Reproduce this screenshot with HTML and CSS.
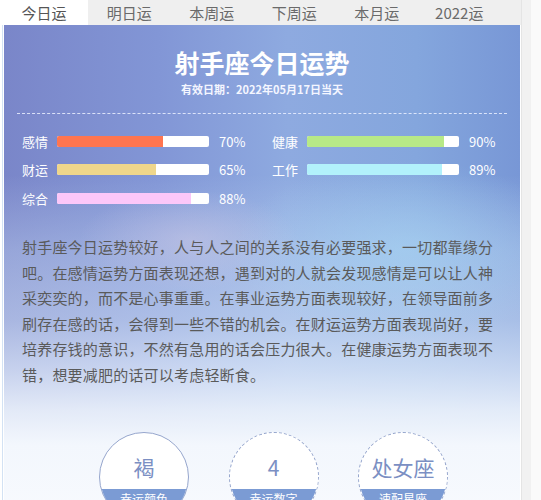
FILE: index.html
```html
<!DOCTYPE html>
<html lang="zh">
<head>
<meta charset="utf-8">
<title>射手座今日运势</title>
<link rel="stylesheet" href="styles.css">
</head>
<body>
<div class="page">
  <div class="main">
    <nav class="tabs">
      <div class="tab active">今日运</div>
      <div class="tab">明日运</div>
      <div class="tab">本周运</div>
      <div class="tab">下周运</div>
      <div class="tab">本月运</div>
      <div class="tab">2022运</div>
    </nav>
    <div class="wrap">
      <section class="card">
        <h1 class="title">射手座今日运势</h1>
        <div class="date">有效日期：2022年05月17日当天</div>
        <div class="dash"></div>
        <div class="bars">
          <div class="item"><span class="lbl">感情</span><span class="bar"><span class="fill f-love" style="width:70%"></span></span><span class="pct">70%</span></div>
          <div class="item"><span class="lbl">健康</span><span class="bar"><span class="fill f-health" style="width:90%"></span></span><span class="pct">90%</span></div>
          <div class="item"><span class="lbl">财运</span><span class="bar"><span class="fill f-money" style="width:65%"></span></span><span class="pct">65%</span></div>
          <div class="item"><span class="lbl">工作</span><span class="bar"><span class="fill f-work" style="width:89%"></span></span><span class="pct">89%</span></div>
          <div class="item"><span class="lbl">综合</span><span class="bar"><span class="fill f-all" style="width:88%"></span></span><span class="pct">88%</span></div>
        </div>
        <p class="text">射手座今日运势较好，人与人之间的关系没有必要强求，一切都靠缘分吧。在感情运势方面表现还想，遇到对的人就会发现感情是可以让人神采奕奕的，而不是心事重重。在事业运势方面表现较好，在领导面前多刷存在感的话，会得到一些不错的机会。在财运运势方面表现尚好，要培养存钱的意识，不然有急用的话会压力很大。在健康运势方面表现不错，想要减肥的话可以考虑轻断食。</p>
        <div class="lucky">
          <div class="circle"><div class="val">褐</div><div class="band">幸运颜色</div></div>
          <div class="circle dashed"><div class="val">4</div><div class="band">幸运数字</div></div>
          <div class="circle dashed"><div class="val">处女座</div><div class="band">速配星座</div></div>
        </div>
      </section>
    </div>
  </div>
  <div class="side"></div>
</div>
</body>
</html>
```

FILE: styles.css
```css
* { box-sizing: border-box; }
html, body { margin: 0; padding: 0; }
body {
  background: #fff;
  font-family: "Noto Sans CJK SC", "Microsoft YaHei", sans-serif;
}
.page {
  width: 541px;
  height: 500px;
  overflow: hidden;
  display: flex;
}
.main {
  width: 521px;
  display: flex;
  flex-direction: column;
}
.side {
  flex: 1;
  background: linear-gradient(to right, #f1f1f1 0, #f1f1f1 9px, #fafafa 9px);
  border-left: 1px solid #e4e4e4;
}
.tabs {
  display: flex;
  height: 29px;
  background: #efefef;
}
.tab {
  width: 82.5px;
  text-align: center;
  font-size: 15px;
  line-height: 25px;
  color: #6a6a6a;
}
.tab.active {
  width: 88px;
  background: #fff;
  color: #555;
}
.wrap {
  flex: 1;
  padding-left: 2px;
  display: flex;
}
.wrap::before {
  content: "";
  width: 1px;
  background: #d3e2f4;
  margin-right: 1px;
}
.card {
  width: 516px;
  padding: 22px 23px 0 18px;
  background:
    radial-gradient(ellipse 110px 50px at 185px 215px, rgba(205,200,228,0.5), rgba(205,200,228,0) 100%),
    radial-gradient(ellipse 170px 90px at 400px 225px, rgba(165,212,243,0.6), rgba(165,212,243,0) 100%),
    linear-gradient(to bottom, rgba(255,255,255,0) 0, rgba(255,255,255,0) 150px, rgba(205,224,246,0.35) 225px, rgba(215,230,248,0.5) 295px, rgba(228,238,251,0.72) 345px, rgba(238,244,252,0.9) 385px, #f3f7fd 420px, #f8fafe 100%),
    linear-gradient(to right, #7a86c9 0, #8296d6 30%, #8eaae0 55%, #84a6dd 80%, #7897d6 100%);
}
.title {
  margin: 0;
  text-align: center;
  font-size: 25px;
  line-height: 30px;
  font-weight: bold;
  color: #fff;
  padding-left: 5px;
}
.date {
  text-align: center;
  font-size: 11px;
  line-height: 14px;
  font-weight: bold;
  color: #f4f6ff;
  margin-top: 5px;
  padding-left: 5px;
}
.dash {
  margin: 17px 0 0 -5px;
  width: 490px;
  border-top: 1px dashed rgba(235,240,255,0.85);
}
.bars {
  margin-top: 18px;
  display: grid;
  grid-template-columns: 250px 230px;
  row-gap: 10.5px;
}
.item {
  display: flex;
  align-items: center;
  height: 18px;
}
.lbl {
  width: 35px;
  font-size: 13px;
  color: #fff;
}
.bar {
  width: 152px;
  height: 11px;
  background: #fff;
  border-radius: 2px;
  overflow: hidden;
  display: flex;
}
.fill { height: 100%; }
.f-love { background: #ff7550; }
.f-money { background: #efd68b; }
.f-all { background: #fcc7f9; }
.f-health { background: #b7e987; }
.f-work { background: #b2f1fb; }
.pct {
  margin-left: 10px;
  font-size: 13px;
  color: #fff;
}
.text {
  margin: 27px 0 0 0;
  width: 482px;
  font-size: 15px;
  letter-spacing: 0.2px;
  line-height: 25.6px;
  color: #5a5a5a;
}
.lucky {
  margin-top: 44px;
  padding-left: 77px;
  display: flex;
  gap: 39.5px;
}
.circle {
  width: 90px;
  height: 90px;
  border-radius: 50%;
  border: 1px solid #96a6cd;
  background: #fff;
  overflow: hidden;
  display: flex;
  flex-direction: column;
  align-items: center;
}
.circle.dashed { border-style: dashed; }
.val {
  height: 56px;
  padding-top: 20px;
  font-size: 21px;
  line-height: 28px;
  color: #7b8fc3;
}
.band {
  width: 100%;
  flex: 1;
  background: #7b9bd4;
  color: #fff;
  font-size: 12px;
  text-align: center;
  line-height: 20px;
}
```
